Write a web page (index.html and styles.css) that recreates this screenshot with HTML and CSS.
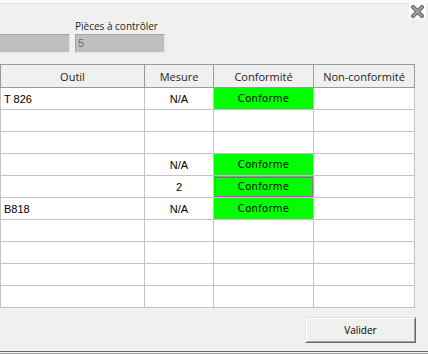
FILE: index.html
```html
<!DOCTYPE html>
<html lang="fr">
<head>
    <meta charset="UTF-8">
    <meta name="viewport" content="width=device-width, initial-scale=1.0">
    <title>Contrôle des outils</title>
    <link rel="stylesheet" href="styles.css">
</head>
<body>
    <div id="window">
        <!-- bord supérieur de la fenêtre -->
        <div class="frame-edge"></div>

        <!-- barre du haut avec le bouton fermer -->
        <div class="topbar">
            <div class="close-box" title="Fermer">
                <svg width="13" height="13" viewBox="0 0 13 13">
                    <path d="M2 2 L11 11 M11 2 L2 11" stroke="#5e5e5e" stroke-width="4" stroke-linecap="square"/>
                    <path d="M2 2 L11 11 M11 2 L2 11" stroke="#a3a3a3" stroke-width="2" stroke-linecap="square"/>
                </svg>
            </div>
        </div>

        <!-- champs en lecture seule -->
        <div class="fields">
            <div class="field">
                <span class="field-label"></span>
                <div class="field-input field-cut"></div>
            </div>
            <div class="field">
                <span class="field-label">Pièces à contrôler</span>
                <div class="field-input field-small">5</div>
            </div>
        </div>

        <!-- tableau des outils -->
        <table class="grid">
            <colgroup>
                <col class="col-tool">
                <col class="col-measure">
                <col class="col-ok">
                <col class="col-nok">
            </colgroup>
            <thead>
                <tr>
                    <th>Outil</th>
                    <th>Mesure</th>
                    <th>Conformité</th>
                    <th>Non-conformité</th>
                </tr>
            </thead>
            <tbody>
                <tr><td class="tool">T 826</td><td class="measure">N/A</td><td class="ok">Conforme</td><td></td></tr>
                <tr><td></td><td></td><td></td><td></td></tr>
                <tr><td></td><td></td><td></td><td></td></tr>
                <tr><td class="tool"></td><td class="measure">N/A</td><td class="ok">Conforme</td><td></td></tr>
                <tr><td class="tool"></td><td class="measure">2</td><td class="ok focused">Conforme</td><td></td></tr>
                <tr><td class="tool">B818</td><td class="measure">N/A</td><td class="ok">Conforme</td><td></td></tr>
                <tr><td></td><td></td><td></td><td></td></tr>
                <tr><td></td><td></td><td></td><td></td></tr>
                <tr><td></td><td></td><td></td><td></td></tr>
                <tr><td></td><td></td><td></td><td></td></tr>
            </tbody>
        </table>

        <!-- bouton de validation -->
        <div class="actions">
            <button class="btn" type="button">Valider</button>
        </div>

        <!-- bord inférieur -->
        <div class="frame-bottom"></div>
    </div>
</body>
</html>
```

FILE: styles.css
```css
/* fond de fenêtre type Windows */
body {
    margin: 0;
    background-color: #f0f0f0;
    font-family: "Open Sans", "Noto Sans", sans-serif;
    overflow: hidden;
}
#window {
    width: 428px;
    height: 354px;
    display: flex;
    flex-direction: column;
}
.frame-edge {
    height: 3px;
    background: #fafafa;
    border-bottom: 1px solid #e2e2e2;
}
/* barre supérieure */
.topbar {
    height: 15px;
    display: flex;
    justify-content: flex-end;
    padding-right: 2px;
}
.close-box {
    width: 17px;
    height: 16px;
    margin-top: -1px;
    background: #fff;
    display: flex;
    align-items: center;
    justify-content: center;
}
/* champs */
.fields {
    display: flex;
    gap: 5px;
    align-items: flex-end;
}
.field {
    display: flex;
    flex-direction: column;
}
.field-label {
    height: 15px;
    font-size: 10px;
    line-height: 15px;
    color: #1e1e1e;
    white-space: nowrap;
}
.field-input {
    box-sizing: border-box;
    height: 19px;
    width: 90px;
    background: #bfbfbf;
    border: 1px solid;
    border-color: #a5a5a5 #e6e6e6 #e6e6e6 #a5a5a5;
    font-family: "Liberation Sans", sans-serif;
    font-size: 11px;
    line-height: 17px;
    color: #6d6d6d;
    padding-left: 2px;
}
.field-cut {
    width: 70px;
    border-left: none;
}
/* tableau */
.grid {
    margin-top: 11px;
    border-collapse: collapse;
    table-layout: fixed;
    width: 415px;
    background: #fff;
}
.col-tool { width: 144px; }
.col-measure { width: 69px; }
.col-ok { width: 100px; }
.col-nok { width: 101px; }
.grid th {
    height: 22px;
    padding: 0;
    background: #f0f0f0;
    border: 1px solid #999;
    font-weight: normal;
    font-size: 11px;
    color: #1e1e1e;
    text-align: center;
}
.grid td {
    height: 21px;
    padding: 0;
    border: 1px solid #c3c3c3;
    font-family: "Liberation Sans", sans-serif;
    font-size: 11px;
    color: #000;
}
.grid td.tool {
    padding-left: 3px;
}
.grid td.measure {
    text-align: center;
}
.grid td.ok {
    background: #00ff00;
    text-align: center;
    font-family: "DejaVu Sans", sans-serif;
    font-size: 10px;
    letter-spacing: 0.3px;
}
.grid td.focused {
    outline: 1px dotted #ff00ff;
    outline-offset: -2px;
}
/* bouton */
.actions {
    display: flex;
    justify-content: flex-end;
    padding-right: 12px;
    margin-top: 9px;
}
.btn {
    width: 111px;
    height: 26px;
    background: #f0f0f0;
    border: 1px solid;
    border-color: #e3e3e3 #696969 #696969 #e3e3e3;
    box-shadow: inset 1px 1px 0 #fff, inset -1px -1px 0 #a0a0a0;
    font-family: "Open Sans", sans-serif;
    font-size: 10px;
    color: #000;
    padding: 0;
}
.frame-bottom {
    margin-top: 8px;
    height: 1px;
    border-top: 1px solid #6a6a6a;
    border-bottom: 1px solid #a0a0a0;
}
```
